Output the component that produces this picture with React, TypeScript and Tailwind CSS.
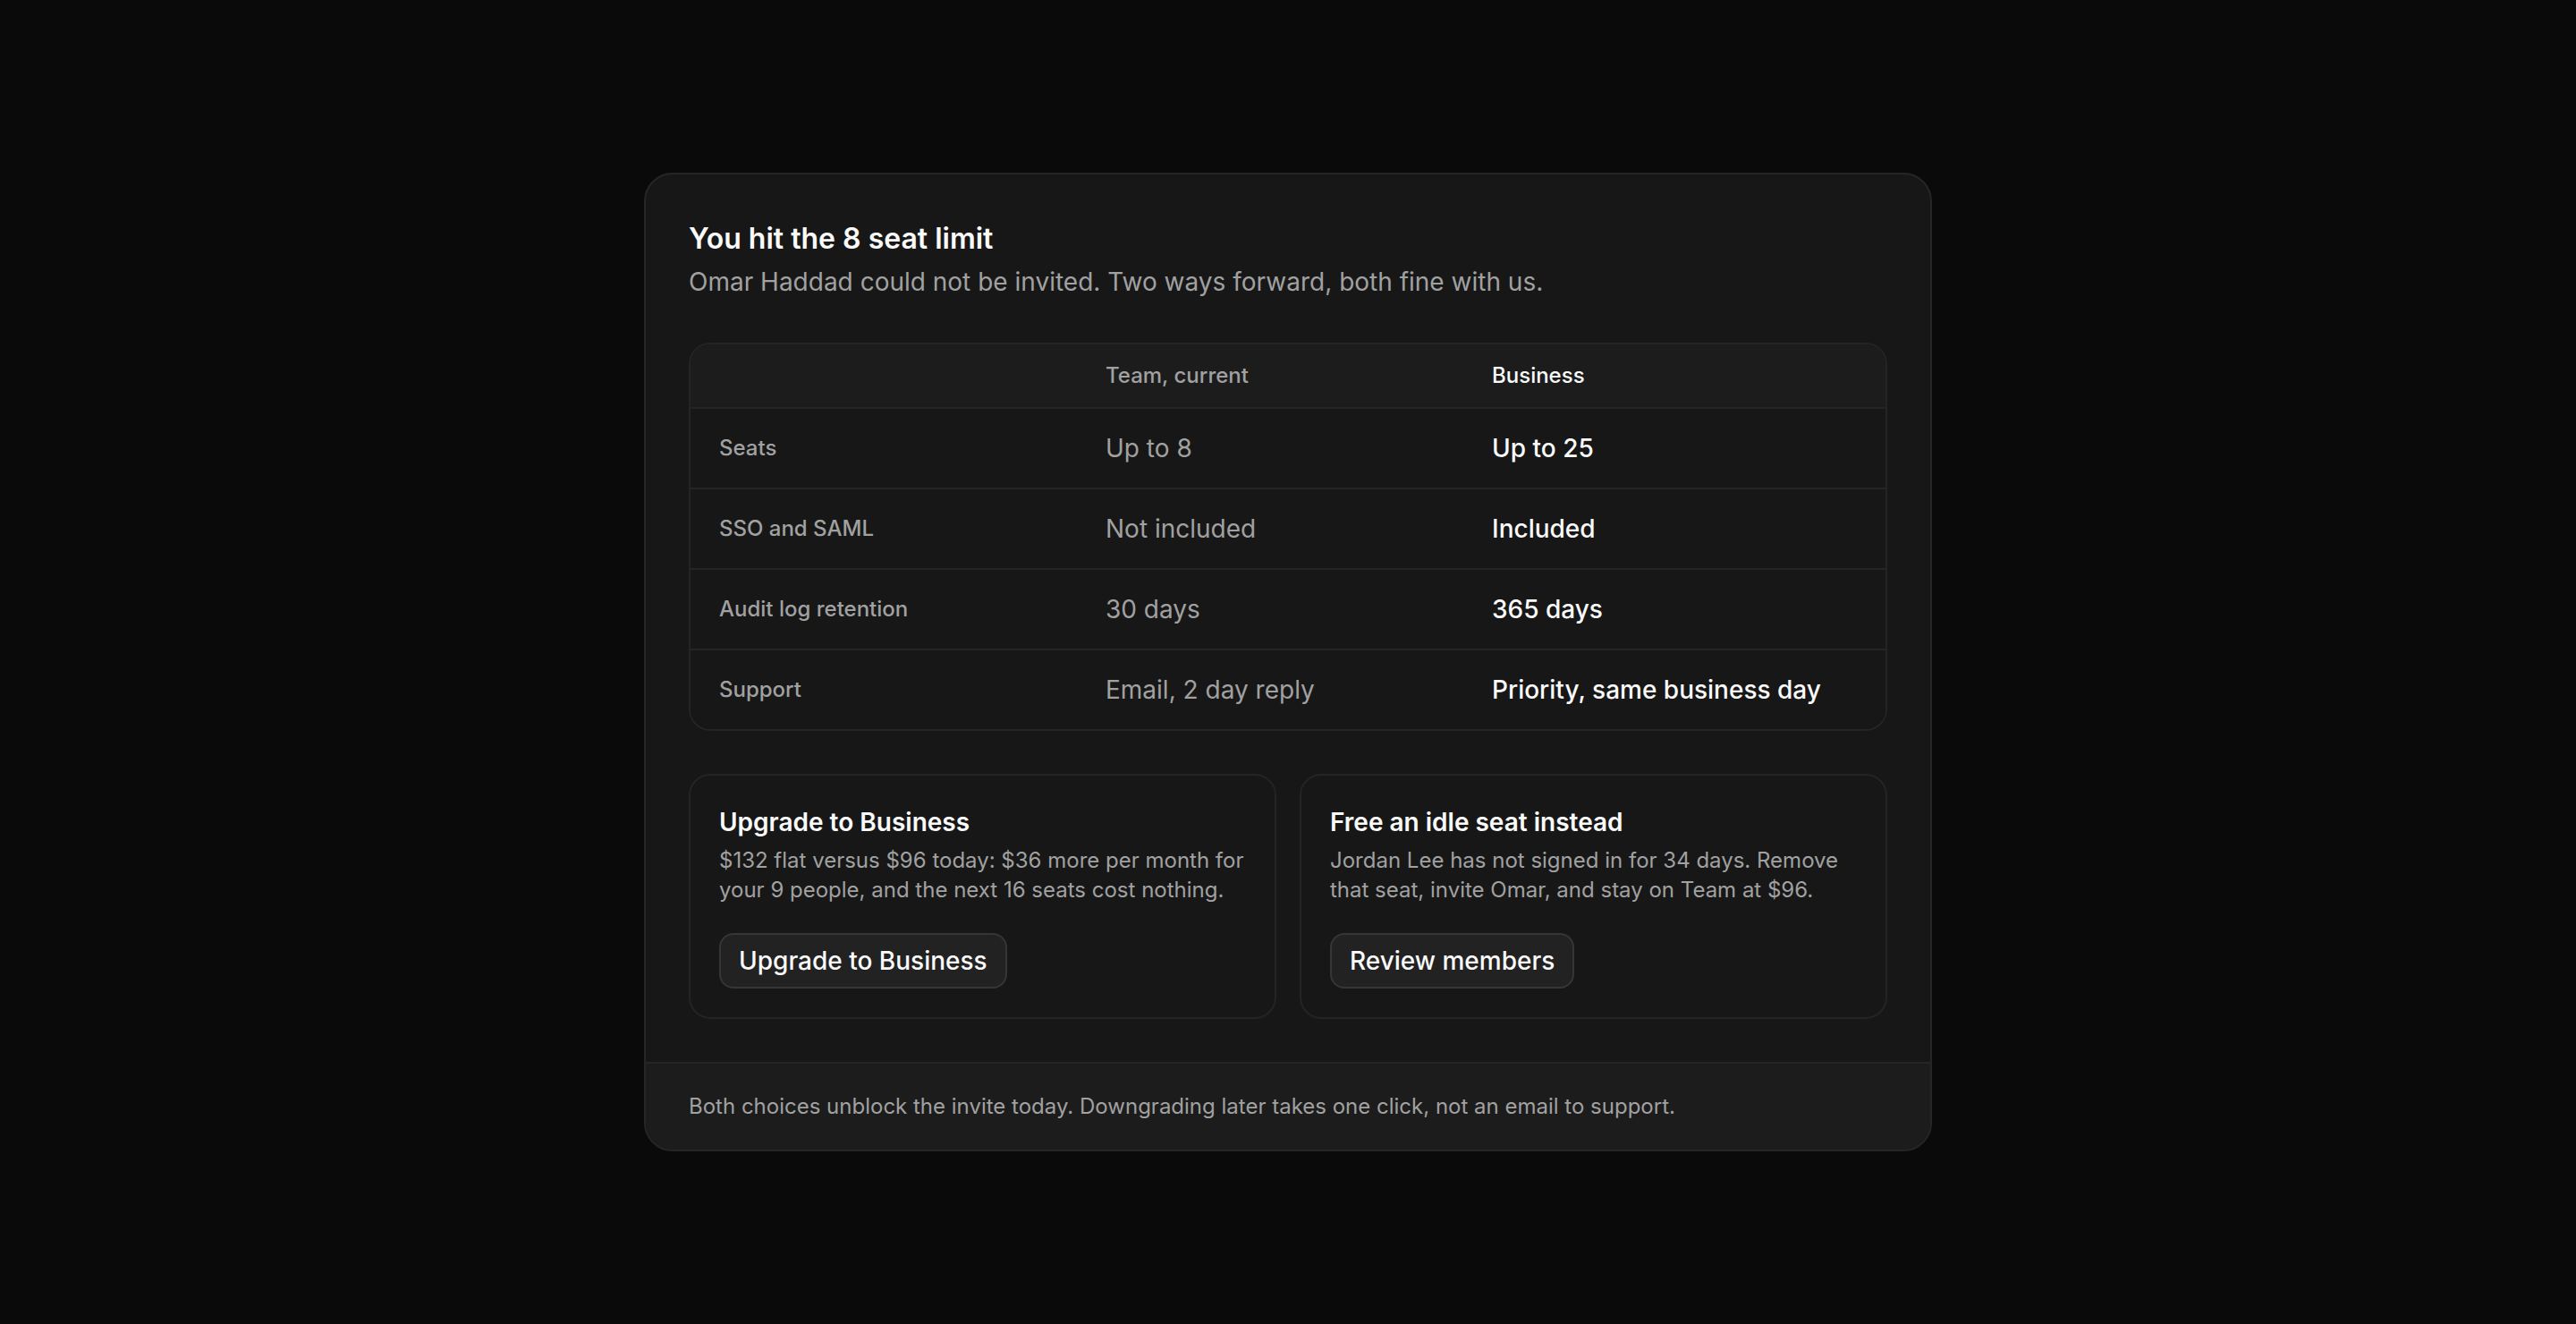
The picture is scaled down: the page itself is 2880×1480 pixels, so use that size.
const rows = [
  { label: "Seats", team: "Up to 8", business: "Up to 25" },
  { label: "SSO and SAML", team: "Not included", business: "Included" },
  { label: "Audit log retention", team: "30 days", business: "365 days" },
  { label: "Support", team: "Email, 2 day reply", business: "Priority, same business day" },
];

const options = [
  {
    title: "Upgrade to Business",
    body: "$132 flat versus $96 today: $36 more per month for your 9 people, and the next 16 seats cost nothing.",
    action: "Upgrade to Business",
  },
  {
    title: "Free an idle seat instead",
    body: "Jordan Lee has not signed in for 34 days. Remove that seat, invite Omar, and stay on Team at $96.",
    action: "Review members",
  },
];

function OptionCard({ title, body, action }: { title: string; body: string; action: string }) {
  return (
    <div className="rounded-[24px] border-2 border-[#242424] bg-[#171717] p-[32px]">
      <h3 className="text-[28px] font-semibold leading-[40px] text-[#fafafa]">{title}</h3>
      <p className="mt-[6px] text-[24px] leading-[33px] text-[#a1a1a1]">{body}</p>
      <button className="mt-[32px] rounded-[16px] border-2 border-[#363636] bg-[#222222] px-[20px] py-[9px] text-[28px] font-medium leading-[40px] text-[#fafafa]">
        {action}
      </button>
    </div>
  );
}

export default function App() {
  return (
    <div className="flex min-h-screen items-center justify-center bg-[#0a0a0a] font-['Inter',sans-serif] antialiased">
      <div className="w-[1440px] overflow-hidden rounded-[32px] border-2 border-[#262626] bg-[#171717]">
        <div className="px-[48px] pb-[48px] pt-[48px]">
          <h2 className="text-[32px] font-semibold leading-[48px] text-[#fafafa]">
            You hit the 8 seat limit
          </h2>
          <p className="mt-[4px] text-[28px] leading-[40px] text-[#a1a1a1]">
            Omar Haddad could not be invited. Two ways forward, both fine with us.
          </p>

          <div className="mt-[48px] overflow-hidden rounded-[24px] border-2 border-[#242424]">
            <div className="grid grid-cols-[432px_432px_1fr] bg-[#1c1c1c] py-[19px] text-[24px] font-medium leading-[32px]">
              <div className="px-[32px]" />
              <div className="px-[32px] text-[#a1a1a1]">Team, current</div>
              <div className="px-[32px] text-[#fafafa]">Business</div>
            </div>
            {rows.map((row) => (
              <div
                key={row.label}
                className="grid grid-cols-[432px_432px_1fr] items-center border-t-2 border-[#242424] bg-[#171717] py-[24px]"
              >
                <div className="px-[32px] text-[24px] font-medium leading-[32px] text-[#a1a1a1]">
                  {row.label}
                </div>
                <div className="px-[32px] text-[28px] leading-[40px] text-[#a1a1a1]">{row.team}</div>
                <div className="px-[32px] text-[28px] font-medium leading-[40px] text-[#fafafa]">
                  {row.business}
                </div>
              </div>
            ))}
          </div>

          <div className="mt-[48px] grid grid-cols-2 gap-[26px]">
            {options.map((o) => (
              <OptionCard key={o.title} {...o} />
            ))}
          </div>
        </div>

        <div className="border-t-2 border-[#262626] bg-[#1c1c1c] px-[48px] py-[32px] text-[24px] leading-[32px] text-[#a1a1a1]">
          Both choices unblock the invite today. Downgrading later takes one click, not an email to support.
        </div>
      </div>
    </div>
  );
}
